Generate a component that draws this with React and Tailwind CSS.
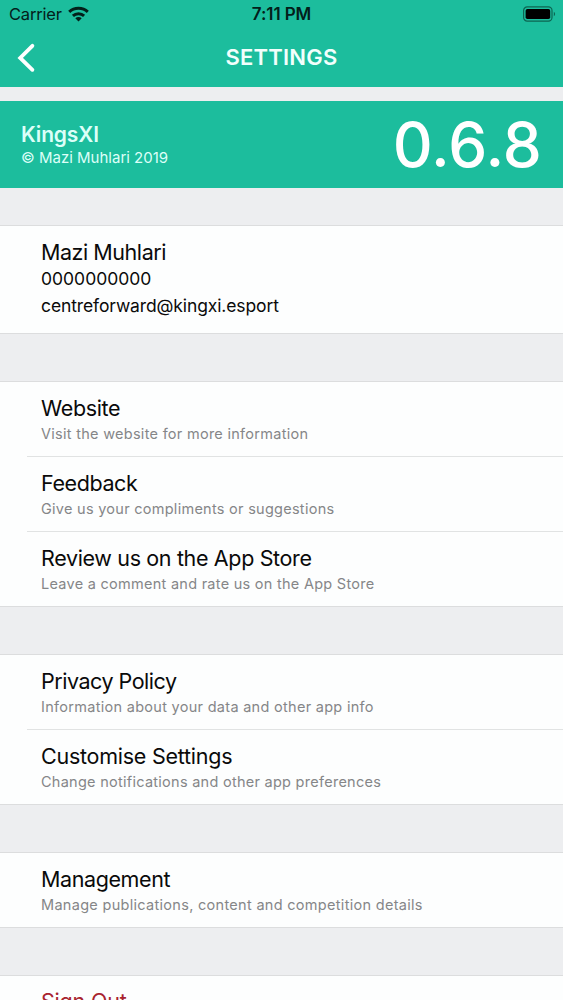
const groups = [
  [
    { title: 'Website', text: 'Visit the website for more information', titleClass: 'tracking-[-0.35px]', textClass: 'tracking-[0.28px]' },
    { title: 'Feedback', text: 'Give us your compliments or suggestions', titleClass: 'tracking-[-0.4px]', textClass: 'tracking-[0.27px]' },
    { title: 'Review us on the App Store', text: 'Leave a comment and rate us on the App Store', titleClass: 'tracking-[-0.35px]', textClass: 'tracking-[0.27px]' },
  ],
  [
    { title: 'Privacy Policy', text: 'Information about your data and other app info', titleClass: 'tracking-[-0.48px]', textClass: 'tracking-[0.29px]' },
    { title: 'Customise Settings', text: 'Change notifications and other app preferences', titleClass: 'tracking-[-0.25px]', textClass: 'tracking-[0.27px]' },
  ],
  [
    { title: 'Management', text: 'Manage publications, content and competition details', titleClass: 'tracking-[-0.4px]', textClass: 'tracking-[0.3px]' },
  ],
];

function WifiIcon() {
  return (
    <svg width="21" height="16" viewBox="0 0 21 16" fill="none" stroke="#03201a" strokeWidth="3">
      <path d="M1.2 5.9C6.3 1.1 14.7 1.1 19.8 5.9" />
      <path d="M4.9 9.8C8 6.9 13 6.9 16.1 9.8" />
      <path d="M10.5 15.4L7.3 12.3C9.1 10.6 11.9 10.6 13.7 12.3Z" fill="#03201a" stroke="none" />
    </svg>
  );
}

function BatteryIcon() {
  return (
    <svg width="34" height="16" viewBox="0 0 34 16" fill="none">
      <rect x="0.6" y="0.9" width="28.4" height="14.2" rx="3.6" stroke="#0d6552" strokeWidth="1.2" />
      <rect x="2.6" y="3" width="24.6" height="10" rx="1.8" fill="#000" />
      <path d="M30.8 5.8C32.6 6.6 32.6 9.4 30.8 10.2Z" fill="#0d6552" />
    </svg>
  );
}

function Row({ item, last }) {
  return (
    <div className={last ? 'flex h-[75px] border-b border-[#dcddde] pl-[27px]' : 'flex h-[75px] pl-[27px]'}>
      <div className={last ? 'flex-1 pt-3 pl-3.5' : 'flex-1 border-b border-[#e1e3e3] pt-3 pl-3.5'}>
        <h2 className={`text-[21.5px] leading-7 whitespace-nowrap text-[#0a0a0a] ${item.titleClass}`}>{item.title}</h2>
        <p className={`text-[14.5px] leading-[23px] whitespace-nowrap text-[#858688] ${item.textClass}`}>{item.text}</p>
      </div>
    </div>
  );
}

function App() {
  return (
    <div className="h-[1000px] w-full overflow-hidden bg-[#edeef0] font-['Inter',sans-serif]">
      <header className="h-[87px] bg-[#1cbd9d]">
        <div className="grid h-7 grid-cols-3 items-center pr-1.5 pl-[9px] text-[#03201a]">
          <div className="flex items-center gap-1.5">
            <span className="text-[16.5px] leading-[26px] tracking-[-0.2px]">Carrier</span>
            <WifiIcon />
          </div>
          <span className="pr-[3px] text-center text-[17px] leading-[26px] font-semibold tracking-[-0.1px]">7:11 PM</span>
          <div className="flex justify-end">
            <BatteryIcon />
          </div>
        </div>
        <div className="grid h-[59px] grid-cols-3 items-center">
          <button className="pl-4">
            <svg width="20" height="30" viewBox="0 0 20 30" fill="none" stroke="#fff" strokeWidth="3.8" strokeLinecap="round">
              <path d="M16.4 2.8L4.2 14.9L16.4 26.8" />
            </svg>
          </button>
          <h1 className="text-center text-[22px] font-semibold tracking-[0.2px] text-[#f2fffc]">SETTINGS</h1>
        </div>
      </header>

      <section className="mt-[14px] flex h-[87px] items-center justify-between bg-[#1cbd9d] pr-[21px] pl-[21px]">
        <div className="text-[#dcfff8]">
          <h2 className="text-[21px] leading-[25px] font-semibold tracking-[-0.15px]">KingsXI</h2>
          <p className="text-[15px] leading-[21px]">© Mazi Muhlari 2019</p>
        </div>
        <span className="text-[62px] leading-[87px] font-medium tracking-[0.1px] text-white">0.6.8</span>
      </section>

      <section className="mt-[37px] h-[109px] border-y border-[#dcddde] bg-[#fdfefe] pt-3 pl-[41px] text-[#0a0a0a]">
        <h2 className="text-[21.5px] leading-7 tracking-[-0.45px]">Mazi Muhlari</h2>
        <p className="text-[17.5px] leading-[26px]">0000000000</p>
        <p className="text-[17.5px] leading-[28px] tracking-[-0.12px]">centreforward@kingxi.esport</p>
      </section>

      {groups.map((group) => (
        <section key={group[0].title} className="mt-[47px] border-t border-[#dcddde] bg-[#fdfefe]">
          {group.map((item, i) => (
            <Row key={item.title} item={item} last={i === group.length - 1} />
          ))}
        </section>
      ))}

      <section className="mt-[47px] h-[75px] border-t border-[#dcddde] bg-[#fdfefe] pt-[11px] pl-[41px]">
        <button className="text-[21.5px] leading-7 tracking-[-0.2px] text-[#a8232f]">Sign Out</button>
      </section>
    </div>
  );
}

export default App;
